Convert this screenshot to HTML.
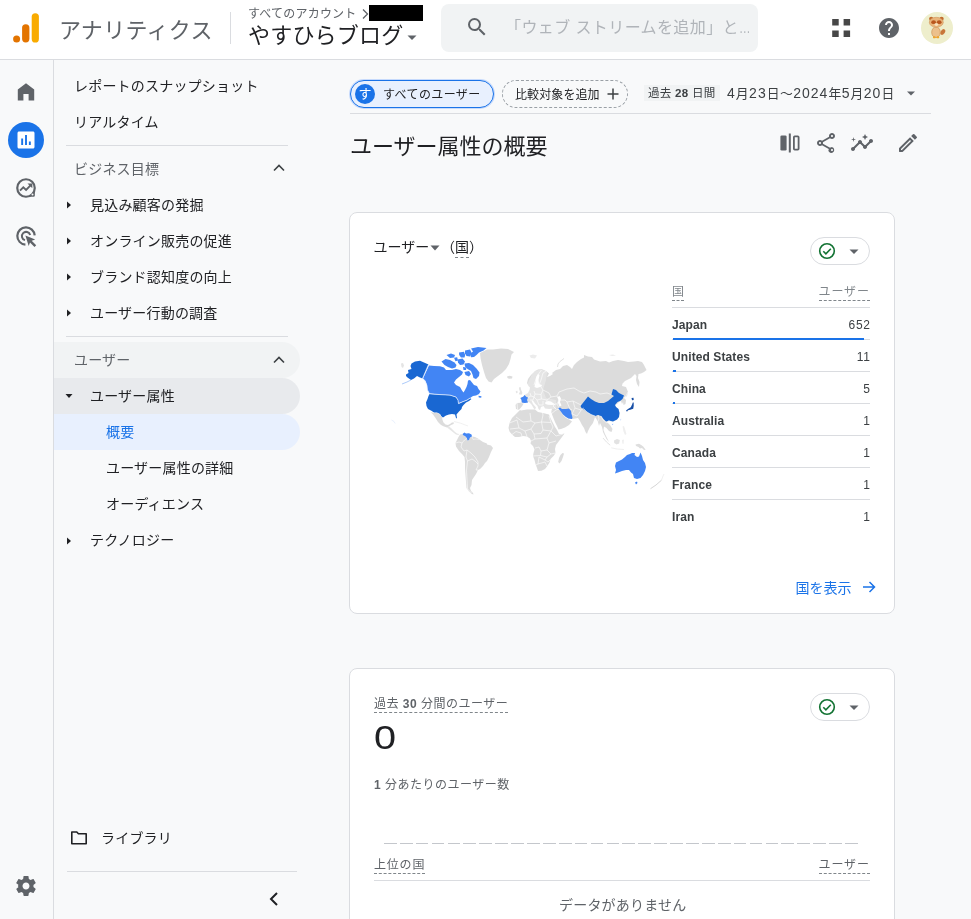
<!DOCTYPE html>
<html lang="ja">
<head>
<meta charset="utf-8">
<title>アナリティクス</title>
<style>
*{box-sizing:border-box;margin:0;padding:0}
html,body{width:971px;height:919px;overflow:hidden;background:#f8f9fa;
  font-family:"Liberation Sans","Noto Sans CJK JP",sans-serif;color:#202124;font-size:14px}
#wrap{position:absolute;left:0;top:0;width:971px;height:919px;overflow:hidden;will-change:transform;-webkit-font-smoothing:antialiased}
.abs{position:absolute}
.t{position:absolute;white-space:nowrap;line-height:1}
#hdr{position:absolute;left:0;top:0;width:971px;height:60px;background:#fff;border-bottom:1px solid #dadce0}
#rail{position:absolute;left:0;top:60px;width:54px;height:859px;border-right:1px solid #dadce0;background:#f8f9fa}
#nav{position:absolute;left:54px;top:60px;width:250px;height:859px;background:#f8f9fa}
.ni{position:absolute;left:0;width:246px;height:36px}
.ni .t{top:calc(50% + .5px);transform:translateY(-50%);font-size:14px;color:#202124;letter-spacing:.2px}
.ni.g2 .t{top:calc(50% + .1px)}
.t i{font-style:normal;font-size:12.800px;letter-spacing:.5px}
.hr{position:absolute;height:1px;background:#dadce0}
.card{position:absolute;background:#fff;border:1px solid #dadce0;border-radius:8px}
.row{position:absolute;left:322px;width:198px;height:32px;border-bottom:1px solid #dadce0}
.row .n{position:absolute;left:0;top:10px;font-size:12px;font-weight:bold;color:#3c4043;line-height:14px;letter-spacing:.1px}
.row .v{position:absolute;right:0;top:10px;font-size:12px;color:#3c4043;line-height:14px;letter-spacing:.7px;margin-right:-.7px}
.row .b{position:absolute;left:1px;bottom:-1px;height:2px;background:#1a73e8}
.dash{border-bottom:1px dashed #80868b}
</style>
</head>
<body>
<div id="wrap">
<!-- HEADER -->
<div id="hdr">
  <svg class="abs" style="left:12px;top:12px" width="28" height="32" viewBox="0 0 28 32">
    <rect x="19.700" y="1.200" width="7.200" height="29.300" rx="3.600" fill="#f9ab00"/>
    <rect x="10.100" y="12.200" width="7.300" height="18.300" rx="3.650" fill="#e37400"/>
    <circle cx="4.600" cy="27" r="3.500" fill="#e37400"/>
  </svg>
  <div class="t" style="left:59px;top:19.500px;font-size:22px;color:#5f6368;letter-spacing:.3px">アナリティクス</div>
  <div class="abs" style="left:230px;top:12px;width:1px;height:32px;background:#dadce0"></div>
  <div class="t" style="left:248px;top:8px;font-size:12px;color:#5f6368;letter-spacing:.2px">すべてのアカウント</div>
  <svg class="abs" style="left:361px;top:8px" width="8" height="12" viewBox="0 0 8 12"><path d="M2 1.500 L6.500 6 L2 10.500" fill="none" stroke="#5f6368" stroke-width="1.300"/></svg>
  <div class="abs" style="left:369px;top:5px;width:54px;height:16px;background:#000"></div>
  <div class="t" style="left:248px;top:25px;font-size:22px;color:#202124;letter-spacing:.2px">やすひらブログ</div>
  <svg class="abs" style="left:407px;top:35px" width="10" height="6" viewBox="0 0 10 6"><path d="M0.500 0.500 H9.500 L5 5 Z" fill="#5f6368"/></svg>
  <div class="abs" style="left:441px;top:4px;width:317px;height:48px;background:#f1f3f4;border-radius:8px"></div>
  <svg class="abs" style="left:465px;top:15px" width="24" height="24" viewBox="0 0 24 24"><path fill="#5f6368" d="M15.500 14h-.79l-.28-.27A6.471 6.471 0 0 0 16 9.500 6.500 6.500 0 1 0 9.500 16c1.610 0 3.090-.59 4.230-1.570l.27.28v.79l5 4.990L20.490 19l-4.990-5zm-6 0C7.010 14 5 11.990 5 9.500S7.010 5 9.500 5 14 7.010 14 9.500 11.990 14 9.500 14z"/></svg>
  <div class="t" style="left:505px;top:19.500px;font-size:16px;color:#b0b4b9;letter-spacing:.4px">「ウェブ ストリームを追加」と<span style="display:inline-block;transform:scaleX(.72);transform-origin:0 50%">…</span></div>
  <svg class="abs" style="left:829px;top:16px" width="24" height="24" viewBox="0 0 24 24"><path fill="#474747" d="M3.200 3h6.500v6.500h-6.500zM14.600 3h6.500v6.500h-6.500zM3.200 14.500h6.500v6.500h-6.500zM14.600 14.500h6.500v6.500h-6.500z"/></svg>
  <svg class="abs" style="left:877px;top:16px" width="24" height="24" viewBox="0 0 24 24"><path fill="#5f6368" d="M12 2C6.480 2 2 6.480 2 12s4.480 10 10 10 10-4.480 10-10S17.520 2 12 2zm1 17h-2v-2h2v2zm2.070-7.750l-.9.920C13.450 12.900 13 13.500 13 15h-2v-.5c0-1.100.45-2.100 1.170-2.830l1.240-1.260c.37-.36.590-.86.590-1.410 0-1.100-.9-2-2-2s-2 .9-2 2H8c0-2.210 1.790-4 4-4s4 1.790 4 4c0 .88-.36 1.680-.93 2.250z"/></svg>
  <svg class="abs" style="left:921px;top:12px" width="32" height="32" viewBox="0 0 32 32">
    <circle cx="16" cy="16" r="16" fill="#eeeecc"/>
    <ellipse cx="21.800" cy="20" rx="2" ry="3.200" transform="rotate(35 21.800 20)" fill="#c8763a"/>
    <circle cx="10.200" cy="6.800" r="2.100" fill="#c26a2c"/><circle cx="20.600" cy="6.800" r="2.100" fill="#c26a2c"/>
    <ellipse cx="15" cy="20.300" rx="4.300" ry="5.400" fill="#ecc08c" stroke="#c98a4e" stroke-width=".6"/>
    <ellipse cx="15.300" cy="10.300" rx="7" ry="5" fill="#e9b57c" stroke="#c98a4e" stroke-width=".5"/>
    <ellipse cx="12.600" cy="10.200" rx="2.400" ry="1.900" fill="#b9571f"/><ellipse cx="18.200" cy="10.200" rx="2.400" ry="1.900" fill="#b9571f"/>
    <ellipse cx="15.400" cy="12.600" rx="1.900" ry="1.400" fill="#f7e3c0"/>
    <rect x="12" y="24.300" width="2.600" height="1.900" rx=".6" fill="#f0a428"/><rect x="15.600" y="24.300" width="2.600" height="1.900" rx=".6" fill="#f0a428"/>
  </svg>
</div>

<!-- RAIL -->
<div id="rail">
  <svg class="abs" style="left:14px;top:20px" width="24" height="24" viewBox="0 0 24 24"><path fill="#5f6368" d="M12 3.200 L3.800 9.600 V20.500 H9.400 V14 H14.600 V20.500 H20.200 V9.600 Z"/></svg>
  <div class="abs" style="left:8px;top:62px;width:36px;height:36px;border-radius:18px;background:#1a73e8"></div>
  <svg class="abs" style="left:14px;top:68px" width="24" height="24" viewBox="0 0 24 24"><path fill="#fff" d="M5 3.500h14c.83 0 1.500.67 1.500 1.500v14c0 .83-.67 1.500-1.500 1.500H5c-.83 0-1.500-.67-1.500-1.500V5c0-.83.67-1.500 1.500-1.500z"/><path fill="#1a73e8" d="M7.200 10.500h1.900v6.500H7.200zM11.050 7h1.900v10h-1.900zM14.900 13.500h1.900v3.500h-1.900z"/></svg>
  <svg class="abs" style="left:14px;top:116px" width="24" height="24" viewBox="0 0 24 24"><path fill="#5f6368" d="M12 20.850 H19.600 Q20.850 20.850 20.850 19.600 V12 A8.850 8.850 0 0 1 12 20.850Z"/><circle cx="12" cy="12" r="8.750" fill="none" stroke="#5f6368" stroke-width="2.200"/><path fill="none" stroke="#5f6368" stroke-width="1.900" d="M6 14.600 l3.300 -3.300 2.800 2.700 4.400 -4.700"/><path fill="#5f6368" d="M13.500 7.400h4.800v4.800z"/><circle cx="18.500" cy="18.500" r="1" fill="#f8f9fa"/></svg>
  <svg class="abs" style="left:14px;top:164px" width="24" height="24" viewBox="0 0 24 24"><path fill="none" stroke="#5f6368" stroke-width="2.200" d="M20.700 11.400 A8.700 8.700 0 1 0 11.400 20.700"/><path fill="none" stroke="#5f6368" stroke-width="2" d="M16.150 11 A4.200 4.200 0 1 0 11 16.150"/><path fill="#5f6368" d="M11.400 11.400 l9.800 4 -3.500 1.300 4.500 4.500 -1.700 1.700 -4.500 -4.500 -1.300 3.500z"/></svg>
  <svg class="abs" style="left:14px;top:814px" width="24" height="24" viewBox="0 0 24 24"><path fill="#5f6368" d="M19.430 12.980c.04-.32.070-.64.070-.98s-.03-.66-.07-.98l2.110-1.650c.19-.15.240-.42.120-.64l-2-3.460c-.12-.22-.39-.3-.61-.22l-2.490 1c-.52-.4-1.080-.73-1.690-.98l-.38-2.650C14.460 2.180 14.250 2 14 2h-4c-.25 0-.46.180-.49.420l-.38 2.650c-.61.250-1.170.59-1.690.98l-2.490-1c-.23-.09-.49 0-.61.220l-2 3.460c-.13.220-.7.490.12.640l2.110 1.650c-.4.320-.7.650-.7.980s.3.660.7.980l-2.110 1.650c-.19.150-.24.420-.12.640l2 3.460c.12.220.39.300.61.220l2.490-1c.52.400 1.080.73 1.690.98l.38 2.650c.3.240.24.420.49.420h4c.25 0 .46-.18.490-.42l.38-2.650c.61-.25 1.170-.59 1.690-.98l2.490 1c.23.090.49 0 .61-.22l2-3.460c.12-.22.070-.49-.12-.64l-2.110-1.650zM12 15.500c-1.930 0-3.500-1.570-3.500-3.500s1.570-3.500 3.500-3.500 3.500 1.570 3.500 3.500-1.570 3.500-3.500 3.500z"/></svg>
</div>

<!-- NAV -->
<div id="nav">
  <div class="ni" style="top:7px;"><div class="t" style="left:20px;color:#202124">レポートのスナップショット</div></div>
  <div class="ni" style="top:43px;"><div class="t" style="left:20px;color:#202124">リアルタイム</div></div>
  <div class="hr" style="left:12px;top:85px;width:222px"></div>
  <div class="ni" style="top:90px;"><div class="t" style="left:20px;color:#5f6368">ビジネス目標</div><svg class="abs" style="left:218px;top:13px" width="14" height="10" viewBox="0 0 14 10"><path d="M2 7.500 L7 2.500 L12 7.500" fill="none" stroke="#3c4043" stroke-width="1.600"/></svg></div>
  <div class="ni" style="top:126px;"><svg class="abs" style="left:12px;top:14.700px" width="6" height="8" viewBox="0 0 6 8"><path d="M1 0.500 L5 4 L1 7.500Z" fill="#202124"/></svg><div class="t" style="left:36px;color:#202124">見込み顧客の発掘</div></div>
  <div class="ni" style="top:162px;"><svg class="abs" style="left:12px;top:14.700px" width="6" height="8" viewBox="0 0 6 8"><path d="M1 0.500 L5 4 L1 7.500Z" fill="#202124"/></svg><div class="t" style="left:36px;color:#202124">オンライン販売の促進</div></div>
  <div class="ni" style="top:198px;"><svg class="abs" style="left:12px;top:14.700px" width="6" height="8" viewBox="0 0 6 8"><path d="M1 0.500 L5 4 L1 7.500Z" fill="#202124"/></svg><div class="t" style="left:36px;color:#202124">ブランド認知度の向上</div></div>
  <div class="ni" style="top:234px;"><svg class="abs" style="left:12px;top:14.700px" width="6" height="8" viewBox="0 0 6 8"><path d="M1 0.500 L5 4 L1 7.500Z" fill="#202124"/></svg><div class="t" style="left:36px;color:#202124">ユーザー行動の調査</div></div>
  <div class="hr" style="left:12px;top:276px;width:222px"></div>
  <div class="ni g2" style="top:282px;background:#f1f3f4;border-radius:0 18px 18px 0;"><div class="t" style="left:20px;color:#5f6368">ユーザー</div><svg class="abs" style="left:218px;top:13px" width="14" height="10" viewBox="0 0 14 10"><path d="M2 7.500 L7 2.500 L12 7.500" fill="none" stroke="#3c4043" stroke-width="1.600"/></svg></div>
  <div class="ni g2" style="top:318px;background:#e8eaed;border-radius:0 18px 18px 0;"><svg class="abs" style="left:11px;top:15px" width="8" height="6" viewBox="0 0 8 6"><path d="M0.500 1 H7.500 L4 5Z" fill="#202124"/></svg><div class="t" style="left:36px;color:#202124">ユーザー属性</div></div>
  <div class="ni g2" style="top:354px;background:#e8f0fe;border-radius:0 18px 18px 0;"><div class="t" style="left:52px;color:#1a73e8">概要</div></div>
  <div class="ni g2" style="top:390px;"><div class="t" style="left:52px;color:#202124">ユーザー属性の詳細</div></div>
  <div class="ni g2" style="top:426px;"><div class="t" style="left:52px;color:#202124">オーディエンス</div></div>
  <div class="ni g2" style="top:462px;"><svg class="abs" style="left:12px;top:14.700px" width="6" height="8" viewBox="0 0 6 8"><path d="M1 0.500 L5 4 L1 7.500Z" fill="#202124"/></svg><div class="t" style="left:36px;color:#202124">テクノロジー</div></div>
  <svg class="abs" style="left:16px;top:770px" width="18" height="16" viewBox="0 0 18 16"><path d="M1.800 2 H6.800 L8.400 3.700 H16.200 V13.800 H1.800Z" fill="none" stroke="#202124" stroke-width="1.600" stroke-linejoin="round"/></svg>
  <div class="ni" style="top:759px;"><div class="t" style="left:47px;color:#202124">ライブラリ</div></div>
  <div class="hr" style="left:13px;top:811px;width:230px"></div>
  <svg class="abs" style="left:214px;top:831px" width="12" height="16" viewBox="0 0 12 16"><path d="M9 2 L3 8 L9 14" fill="none" stroke="#202124" stroke-width="2"/></svg>
</div>

<!-- MAIN -->
<div id="main">
  <!-- filter row -->
  <div class="abs" style="left:350px;top:80px;width:144px;height:28px;border:1px solid #1a73e8;border-radius:14px;background:#e8f0fe;box-shadow:0 0 0 1px #c6dafc"></div>
  <div class="abs" style="left:355px;top:84px;width:20px;height:20px;border-radius:10px;background:#1a73e8"></div>
  <div class="t" style="left:358.500px;top:86.500px;font-size:13px;color:#fff">す</div>
  <div class="t" style="left:383px;top:89px;font-size:12px;color:#202124;letter-spacing:.4px">すべてのユーザー</div>
  <div class="abs" style="left:502px;top:80px;width:126px;height:28px;border:1px dashed #9aa0a6;border-radius:14px"></div>
  <div class="t" style="left:515px;top:89px;font-size:12px;color:#202124;letter-spacing:.1px">比較対象を追加</div>
  <svg class="abs" style="left:606px;top:86.500px" width="14" height="14" viewBox="0 0 14 14"><path d="M7 1.500V12.500M1.500 7H12.500" stroke="#3c4043" stroke-width="1.500" fill="none"/></svg>
  <div class="abs" style="left:644px;top:85px;width:76px;height:16px;background:#f1f3f4"></div>
  <div class="t" style="left:648px;top:88px;font-size:11.500px;color:#3c4043;letter-spacing:.3px">過去 <b>28</b> 日間</div>
  <div class="t" style="left:727px;top:86px;font-size:14px;color:#3c4043;letter-spacing:1px">4<i>月</i>23<i>日</i><i>〜</i>2024<i>年</i>5<i>月</i>20<i>日</i></div>
  <svg class="abs" style="left:906px;top:91px" width="10" height="6" viewBox="0 0 10 6"><path d="M1 0.500H9L5 4.500Z" fill="#5f6368"/></svg>
  <div class="hr" style="left:350px;top:113px;width:581px"></div>
  <!-- title row -->
  <div class="t" style="left:350px;top:135.500px;font-size:22px;color:#202124">ユーザー属性の概要</div>
  <svg class="abs" style="left:778px;top:131px" width="24" height="24" viewBox="0 0 24 24"><rect x="2.400" y="4.400" width="6.200" height="15.200" rx="1.300" fill="#5f6368"/><rect x="10.800" y="2.500" width="2" height="19" fill="#5f6368"/><rect x="15.900" y="5.400" width="4.700" height="13.200" rx=".8" fill="none" stroke="#5f6368" stroke-width="1.800"/></svg>
  <svg class="abs" style="left:814px;top:131px" width="24" height="24" viewBox="0 0 24 24"><path fill="#5f6368" d="M18 16.080c-.76 0-1.440.30-1.960.77L8.910 12.700c.05-.23.090-.46.090-.70s-.04-.47-.09-.70l7.050-4.110c.54.500 1.250.81 2.040.81 1.660 0 3-1.340 3-3s-1.340-3-3-3-3 1.340-3 3c0 .24.040.47.090.70L8.040 9.810C7.500 9.310 6.790 9 6 9c-1.660 0-3 1.340-3 3s1.340 3 3 3c.79 0 1.500-.31 2.040-.81l7.120 4.160c-.5.210-.8.430-.8.650 0 1.610 1.310 2.920 2.920 2.920s2.920-1.310 2.920-2.920-1.310-2.920-2.920-2.920zM18 4c.55 0 1 .45 1 1s-.45 1-1 1-1-.45-1-1 .45-1 1-1zM6 13c-.55 0-1-.45-1-1s.45-1 1-1 1 .45 1 1-.45 1-1 1zm12 7.020c-.55 0-1-.45-1-1s.45-1 1-1 1 .45 1 1-.45 1-1 1z"/></svg>
  <svg class="abs" style="left:850px;top:131px" width="24" height="24" viewBox="0 0 24 24"><path fill="#5f6368" d="M21 8c-1.450 0-2.260 1.440-1.930 2.510l-3.550 3.560c-.30-.09-.74-.09-1.040 0l-2.550-2.550C12.270 10.450 11.460 9 10 9c-1.450 0-2.270 1.440-1.930 2.520l-4.560 4.550C2.440 15.740 1 16.550 1 18c0 1.100.9 2 2 2 1.450 0 2.260-1.440 1.930-2.510l4.550-4.560c.30.09.74.09 1.040 0l2.550 2.550C12.730 16.550 13.540 18 15 18c1.450 0 2.270-1.440 1.930-2.520l3.560-3.550c1.070.33 2.510-.48 2.510-1.930 0-1.100-.9-2-2-2z"/><path fill="#5f6368" d="M15 9l.94-2.070L18 6l-2.060-.93L15 3l-.92 2.070L12 6l2.080.93zM3.500 11L4 9l2-.5L4 8l-.5-2L3 8l-2 .5L3 9z"/></svg>
  <svg class="abs" style="left:896px;top:131px" width="24" height="24" viewBox="0 0 24 24"><path fill="#5f6368" d="M3 17.460v3.040c0 .28.220.50.500.50h3.040c.13 0 .26-.05.350-.15L17.810 9.940l-3.750-3.750L3.150 17.100c-.10.100-.15.220-.15.360zM20.710 7.040a.996.996 0 0 0 0-1.410l-2.340-2.340a.996.996 0 0 0-1.410 0l-1.830 1.830 3.750 3.750 1.830-1.830z"/><path fill="#f8f9fa" d="M14.060 9.020l.92.920L5.920 19H5v-.92z"/></svg>

  <!-- CARD 1 -->
  <div class="card" id="c1" style="left:349px;top:212px;width:546px;height:402px">
    <div class="t" style="left:23.500px;top:27px;font-size:14px;color:#202124">ユーザー</div>
    <svg class="abs" style="left:80px;top:32px" width="10" height="6" viewBox="0 0 10 6"><path d="M0.500 0.500H9.500L5 5.500Z" fill="#5f6368"/></svg>
    <div class="t" style="left:91px;top:27px;font-size:14px;color:#202124">（<span class="dash" style="padding-bottom:2px">国</span>）</div>
    <div class="abs" style="left:460px;top:24px;width:60px;height:28px;border:1px solid #dadce0;border-radius:14px;background:#fff"></div>
    <svg class="abs" style="left:467px;top:28px" width="20" height="20" viewBox="0 0 20 20"><circle cx="10" cy="10" r="7.300" fill="none" stroke="#137333" stroke-width="1.600"/><path d="M6.300 10.200l2.600 2.600 4.900-5" fill="none" stroke="#137333" stroke-width="1.600"/></svg>
    <svg class="abs" style="left:499px;top:36px" width="10" height="6" viewBox="0 0 10 6"><path d="M0.500 0.500H9.500L5 5Z" fill="#5f6368"/></svg>
    <div class="t" style="left:322px;top:73px;font-size:12px;color:#80868b"><span class="dash" style="padding-bottom:1px">国</span></div>
    <div class="t" style="right:25px;top:73px;font-size:12px;color:#80868b;letter-spacing:.9px"><span class="dash" style="padding-bottom:1px;margin-right:-.9px">ユーザー</span></div>
    <div class="hr" style="left:322px;top:94px;width:198px"></div>
    <div class="row" style="top:95px"><div class="n">Japan</div><div class="v">652</div><div class="b" style="width:191px"></div></div>
    <div class="row" style="top:127px"><div class="n">United States</div><div class="v">11</div><div class="b" style="width:3px"></div></div>
    <div class="row" style="top:159px"><div class="n">China</div><div class="v">5</div><div class="b" style="width:2px"></div></div>
    <div class="row" style="top:191px"><div class="n">Australia</div><div class="v">1</div></div>
    <div class="row" style="top:223px"><div class="n">Canada</div><div class="v">1</div></div>
    <div class="row" style="top:255px"><div class="n">France</div><div class="v">1</div></div>
    <div class="row" style="top:287px;border-bottom:0"><div class="n">Iran</div><div class="v">1</div></div>
    <div class="t" style="left:445.500px;top:367.800px;font-size:14px;color:#1a73e8">国を表示</div>
    <svg class="abs" style="left:511px;top:366px" width="16" height="16" viewBox="0 0 16 16"><path d="M2 8H13.500M8.500 3L13.500 8L8.500 13" fill="none" stroke="#1a73e8" stroke-width="1.500"/></svg>
  </div>

  <!-- MAP -->
<svg class="abs" style="left:380px;top:330px" width="290" height="180" viewBox="380 330 290 180">
<path d="M401.0,363.5 403.0,363.0 404.0,365.5 403.0,368.0 401.5,367.0Z" fill="#e4e4e4"/>
<path d="M406.0,374.5 408.5,373.0 408.0,370.0 411.5,369.0 410.5,366.0 411.5,363.5 415.0,361.5 420.0,360.8 424.0,362.5 428.5,364.5 422.5,378.5 420.0,377.5 417.0,376.0 414.0,378.5 411.0,380.0 407.5,377.5 406.0,376.0Z" fill="#1967d2"/>
<path d="M411.0,380.0 407.0,382.0 402.0,384.0" fill="none" stroke="#8ab4f8" stroke-width="0.7"/>
<path d="M429.0,365.5 434.0,366.0 440.0,366.2 444.0,367.5 446.0,370.0 452.0,370.0 456.0,369.0 460.0,370.0 463.0,372.0 462.0,374.5 459.0,377.0 456.0,379.5 454.0,382.5 456.0,385.0 460.0,387.0 462.0,390.5 463.5,392.5 465.0,390.0 466.5,387.0 467.5,384.0 468.0,380.5 470.0,380.0 472.0,382.5 474.0,385.0 477.0,386.0 478.5,389.0 480.5,391.5 479.0,394.0 476.0,395.5 473.0,396.0 470.0,398.0 467.0,400.0 463.0,401.5 460.0,402.5 458.5,403.5 458.0,400.0 456.0,397.0 450.0,395.0 440.0,394.5 429.5,393.5 427.5,390.0 427.0,385.0 425.5,381.0 423.0,378.5Z" fill="#4285f4"/>
<path d="M471.0,348.5 478.0,347.0 486.5,348.0 483.5,350.5 479.0,352.5 476.5,355.0 474.0,357.0 471.0,357.2 470.0,354.0 473.0,351.5Z" fill="#4285f4"/>
<path d="M464.5,363.5 469.0,363.0 473.0,365.0 476.5,368.5 479.5,372.5 479.0,376.0 476.0,379.0 473.5,378.0 472.5,374.5 471.0,371.0 467.5,369.0 465.0,366.5Z" fill="#4285f4"/>
<path d="M441.5,361.5 445.5,359.0 450.0,360.0 454.5,362.5 456.5,365.0 455.5,367.5 452.0,368.5 448.0,367.0 444.5,365.0Z" fill="#4285f4"/>
<path d="M446.5,355.0 451.0,353.5 455.0,355.0 454.0,357.5 450.0,358.0Z" fill="#4285f4"/>
<path d="M457.5,359.5 462.5,358.5 465.0,361.5 463.5,364.5 460.0,365.0 458.0,362.5Z" fill="#4285f4"/>
<path d="M465.0,350.5 470.0,349.5 471.5,352.5 470.0,356.5 466.5,356.0 465.0,353.5Z" fill="#4285f4"/>
<path d="M459.0,352.5 464.0,351.8 465.2,355.0 464.5,357.5 461.0,357.5 459.2,355.0Z" fill="#4285f4"/>
<path d="M454.0,357.8 457.2,357.2 458.0,360.5 455.5,361.2Z" fill="#4285f4"/>
<path d="M478.5,395.8 481.5,396.2 481.2,397.8 478.8,397.5Z" fill="#4285f4"/>
<path d="M464.5,372.0 469.0,371.0 471.0,374.0 469.0,376.5 465.5,375.0Z" fill="#4285f4"/>
<path d="M463.0,367.0 466.5,367.5 466.0,370.0 463.5,370.0Z" fill="#4285f4"/>
<path d="M429.5,394.0 440.0,394.8 450.0,395.3 456.0,397.2 458.0,400.2 458.5,403.8 463.0,401.8 467.0,400.3 470.0,398.3 471.5,399.0 469.0,401.0 466.0,402.5 463.5,405.0 462.0,407.0 461.5,409.0 459.0,411.5 456.5,414.5 457.0,418.5 456.0,418.0 455.0,414.5 452.0,414.0 449.0,414.5 446.0,415.5 443.0,417.5 441.5,416.5 440.0,414.0 437.0,412.5 434.0,412.5 431.0,410.5 428.0,409.0 426.5,406.0 426.0,402.5 427.5,399.0 428.5,396.0Z" fill="#1967d2"/>
<path d="M428.5,364.5 422.5,378.5 424.5,380.0 426.8,385.0 427.5,390.0 429.5,393.7 440.0,394.6 450.0,395.1 456.0,397.0 458.0,400.1 458.5,403.6 463.0,401.6 467.0,400.1 470.0,398.1" fill="none" stroke="#e8f0fe" stroke-width="0.7"/>
<path d="M430.5,412.0 434.0,413.0 437.5,413.0 440.0,414.5 442.0,417.2 442.5,420.0 443.5,422.5 445.5,424.5 448.0,425.0 450.0,424.0 452.0,422.5 454.0,422.5 453.5,424.0 451.0,425.0 449.0,426.5 447.0,427.5 444.0,426.5 441.0,425.0 438.0,422.0 435.5,418.0 433.0,414.5Z" fill="#dcdcdc"/>
<path d="M447.0,427.5 449.0,426.5 451.0,428.0 453.0,430.0 455.0,432.0 457.0,433.5 459.0,434.0 458.5,435.0 456.0,434.5 454.0,433.0 451.5,431.0 449.0,429.0Z" fill="#e6e6e6"/>
<path d="M454.0,421.5 460.0,423.0 468.0,426.0" fill="none" stroke="#ededed" stroke-width="0.8"/>
<path d="M455.5,443.0 457.0,440.0 458.5,437.0 460.0,434.5 462.5,434.0 463.5,435.5 465.0,436.0 466.8,438.0 467.5,440.5 469.0,440.0 470.0,437.5 472.0,436.5 475.0,437.0 478.0,438.5 480.0,440.0 483.0,442.0 486.9,443.5 487.0,444.5 491.0,445.5 493.0,448.0 491.0,452.0 489.0,457.0 487.0,461.0 485.0,463.0 483.0,466.0 480.0,469.0 478.0,470.0 476.0,474.0 474.0,477.0 472.0,480.0 471.5,485.0 470.0,488.0 471.0,491.0 473.0,493.0 473.5,494.5 472.0,494.0 469.0,491.5 466.5,488.0 466.0,482.0 465.5,475.0 465.0,468.0 465.0,462.0 464.5,457.0 462.0,454.0 459.0,451.0 456.0,446.5Z" fill="#dcdcdc"/>
<path d="M462.5,434.0 464.5,432.5 466.0,433.5 469.0,433.2 471.5,434.5 472.0,436.5 470.0,437.5 469.0,440.0 467.5,440.5 466.8,438.0 465.0,436.0 463.5,435.5Z" fill="#4285f4"/>
<path d="M455.5,443.0 459.0,442.0 462.0,443.0 464.5,440.0 466.8,438.5" fill="none" stroke="#fff" stroke-width="0.6"/>
<path d="M462.0,443.0 461.0,447.0 464.0,451.0 467.0,450.0 471.0,453.0 475.0,457.0 478.0,462.0 478.0,466.0 476.0,470.0 478.0,470.0" fill="none" stroke="#fff" stroke-width="0.6"/>
<path d="M467.0,450.0 466.0,457.0 467.5,461.0 472.0,459.0 475.0,461.0 478.0,464.0" fill="none" stroke="#fff" stroke-width="0.6"/>
<path d="M467.5,461.0 466.5,470.0 467.0,480.0 467.5,489.0 471.5,493.0" fill="none" stroke="#fff" stroke-width="0.6"/>
<path d="M472.0,436.5 473.0,439.5 476.0,439.0 479.0,439.5" fill="none" stroke="#fff" stroke-width="0.5"/>
<path d="M480.0,353.0 484.0,351.0 487.0,349.5 493.0,349.5 501.0,348.5 508.0,349.0 514.0,352.0 511.5,354.5 510.5,359.0 509.0,364.0 506.0,369.0 502.0,373.0 498.0,376.0 494.0,379.0 491.5,382.5 488.5,381.5 486.0,378.0 484.0,372.0 482.0,365.0 480.5,358.0Z" fill="#dcdcdc"/>
<path d="M507.0,376.5 509.5,375.8 512.5,376.5 512.0,378.5 509.0,378.8 507.5,378.0Z" fill="#dcdcdc"/>
<path d="M529.5,355.5 533.0,354.5 537.0,355.5 535.0,358.5 531.0,358.0Z" fill="#ececec"/>
<path d="M557.5,367.0 558.0,364.0 560.0,361.5 564.0,358.5" fill="none" stroke="#e2e2e2" stroke-width="1.0"/>
<path d="M609.0,355.0 613.0,354.5 616.0,355.5 612.0,356.0Z" fill="#ececec"/>
<path d="M519.0,387.5 520.5,387.0 521.2,390.0 522.5,393.0 521.5,394.7 518.8,394.2 520.0,391.5 519.2,389.5Z" fill="#e2e2e2"/>
<path d="M515.8,391.0 517.5,390.8 517.6,393.0 516.0,393.2Z" fill="#e6e6e6"/>
<path d="M516.0,409.0 515.5,405.0 517.0,403.0 520.5,402.8 521.5,400.0 520.0,398.0 523.5,396.5 524.5,395.0 528.0,393.0 529.5,390.0 530.0,387.5 531.5,389.0 528.5,386.0 527.0,383.0 528.0,379.0 531.0,375.0 535.0,371.0 538.0,369.5 541.5,369.0 546.0,371.0 549.0,373.5 547.0,377.0 550.0,376.0 553.0,374.0 552.0,373.0 556.0,370.0 560.0,369.0 563.0,366.0 567.0,365.0 570.0,367.0 572.0,369.0 574.0,365.0 577.0,362.0 581.0,359.0 584.0,357.5 584.0,355.0 588.0,356.5 592.0,357.0 594.0,359.5 600.0,361.5 606.0,361.0 609.0,362.5 613.0,361.0 618.0,360.0 624.0,361.0 628.0,362.0 634.0,361.5 638.0,361.0 642.0,362.0 644.0,365.0 645.5,368.0 646.5,370.0 644.0,372.0 641.0,373.5 638.5,374.0 638.0,378.0 639.5,382.0 639.0,387.0 637.0,384.0 636.0,380.0 636.5,376.0 635.0,374.0 633.0,376.0 631.0,378.0 628.0,379.5 625.0,381.0 622.5,383.5 622.0,386.0 626.0,387.0 628.0,392.0 627.0,396.0 624.0,398.0 626.0,400.0 625.5,404.0 623.5,405.0 623.0,402.0 622.0,404.0 621.0,401.0 619.0,402.0 617.0,404.0 615.0,405.0 616.0,407.0 618.5,409.0 619.5,413.0 619.0,417.0 617.0,419.5 613.0,421.5 609.0,421.0 607.0,422.0 610.0,425.0 612.5,429.0 611.5,432.0 609.0,431.0 606.5,428.0 604.0,426.5 603.5,430.0 605.0,434.0 607.0,438.0 609.0,442.0 606.5,439.0 604.5,435.0 603.0,432.0 602.0,427.0 600.0,423.0 599.0,426.0 598.0,422.0 596.5,419.0 595.0,417.0 593.0,423.0 590.0,427.0 588.0,431.0 587.0,434.0 585.5,432.0 584.0,428.0 582.0,425.0 580.0,421.0 578.0,418.0 575.0,418.5 572.5,419.0 568.5,418.5 566.0,417.0 563.0,414.5 560.5,411.5 563.0,415.0 566.0,418.0 570.0,420.0 572.0,421.5 569.0,425.0 565.0,427.5 561.0,429.0 558.5,429.5 557.0,426.0 555.0,422.0 553.0,417.0 551.5,413.0 551.0,410.5 552.0,408.5 554.0,408.5 549.0,409.0 545.0,408.5 543.5,406.0 541.0,407.0 540.0,410.0 538.5,409.0 537.5,406.0 535.0,403.5 533.0,400.5 531.5,400.5 533.0,404.0 536.0,407.5 535.0,409.5 533.5,408.0 531.5,404.5 529.0,402.0 527.0,402.5 524.0,403.0 522.5,405.5 521.0,407.5 519.0,409.8Z" fill="#dcdcdc"/>
<path d="M536.0,377.5 538.0,374.0 539.5,375.0 538.5,380.0 539.0,384.0 542.0,385.0 541.5,386.5 537.0,388.0 534.5,387.0 535.5,382.0Z" fill="#fff"/>
<path d="M545.0,402.5 548.0,401.0 551.0,401.5 553.0,403.0 555.5,404.5 552.0,405.0 548.0,404.8 545.5,404.0Z" fill="#fff"/>
<path d="M557.5,397.0 559.5,396.0 561.0,398.5 560.0,402.0 561.5,405.5 559.5,406.5 558.0,403.0 558.5,400.0Z" fill="#fff"/>
<path d="M520.0,410.0 521.0,410.5 527.0,409.5 535.0,409.5 538.0,412.0 543.0,413.0 549.0,414.5 549.5,416.0 552.0,421.0 555.0,427.0 557.0,430.0 559.0,434.0 562.0,434.0 564.5,433.5 562.0,437.0 559.0,441.0 556.0,445.0 555.0,449.0 555.5,453.0 554.0,455.5 550.5,459.0 549.5,462.5 547.0,466.5 545.0,469.0 541.5,470.8 538.0,471.0 537.0,468.0 535.5,464.0 534.5,460.0 533.0,456.0 533.5,453.0 534.5,449.5 533.0,446.0 530.5,443.5 531.0,441.0 530.0,438.5 527.0,436.5 523.0,436.0 519.0,437.0 515.0,437.0 512.0,434.5 509.5,431.5 508.5,428.0 509.5,423.0 512.0,418.0 516.0,414.0Z" fill="#dcdcdc"/>
<path d="M562.5,453.0 564.0,453.5 563.0,457.0 561.5,461.0 559.5,463.5 558.2,462.0 559.0,458.0 560.5,455.0Z" fill="#dcdcdc"/>
<path d="M517.0,403.0 524.0,395.0 528.0,383.0 533.0,372.0 541.0,369.0 547.0,372.0 546.0,380.0 543.0,390.0 546.0,398.0 556.0,400.0 556.0,409.0 545.0,409.0 536.0,410.0 527.0,403.0Z" fill="#fff" opacity=".28"/>
<path d="M520.5,398.0 523.5,396.5 524.5,395.0 526.5,397.0 528.0,397.5 527.0,400.0 528.0,402.5 525.0,403.0 522.0,402.8 521.5,400.0Z" fill="#4285f4"/>
<path d="M558.0,408.0 560.0,407.5 562.0,409.0 566.0,409.0 569.0,408.5 571.0,411.0 571.5,414.0 572.5,417.5 572.0,419.0 568.5,418.5 566.0,417.0 563.0,414.5 560.5,411.0Z" fill="#4285f4"/>
<path d="M580.5,406.0 588.0,396.5 591.0,399.0 595.0,401.5 599.0,403.0 604.0,403.0 608.0,401.0 611.0,398.5 614.0,396.0 611.5,394.5 613.0,389.0 616.0,390.0 619.0,393.0 622.0,394.5 624.0,395.5 622.5,399.0 620.0,401.0 617.5,402.0 615.0,405.0 616.0,407.0 618.5,409.0 619.5,413.0 619.0,417.0 617.0,419.5 613.0,421.5 609.0,420.5 606.0,421.5 603.5,419.0 601.0,416.0 598.0,415.0 595.0,416.0 591.0,414.5 587.0,412.0 584.0,409.5 581.5,408.0Z" fill="#1967d2"/>
<path d="M631.5,398.0 633.5,397.8 633.7,400.0 632.0,400.2Z" fill="#174ea6"/>
<path d="M632.8,402.5 633.7,402.5 633.7,406.0 633.2,408.8 630.2,409.8 628.0,410.3 627.0,411.8 626.0,410.6 628.0,409.0 630.8,407.2 632.2,404.2Z" fill="#174ea6"/>
<path d="M603.0,438.0 606.5,442.0 610.2,445.2" fill="none" stroke="#e4e4e4" stroke-width="1.0"/>
<path d="M611.2,447.8 617.0,449.0 624.0,449.5" fill="none" stroke="#ebebeb" stroke-width="0.8"/>
<path d="M614.0,440.5 617.0,439.0 619.8,440.0 619.2,443.5 616.5,444.5 614.2,443.0Z" fill="#e2e2e2"/>
<path d="M622.5,426.5 624.0,426.0 625.0,429.0 626.5,434.0 625.0,435.0 623.5,431.5Z" fill="#efefef"/>
<path d="M622.0,440.0 624.0,439.5 623.5,444.0 622.3,443.5Z" fill="#f0f0f0"/>
<path d="M635.5,444.5 639.0,443.8 641.2,445.0 643.2,446.5 645.7,449.7 644.0,450.0 642.0,448.0 640.0,448.5 638.5,447.0 636.0,446.0Z" fill="#dedede"/>
<path d="M620.2,419.0 621.2,418.8 621.0,420.5 620.3,420.4Z" fill="#cfe0fc"/>
<path d="M612.0,424.0 613.2,423.8 613.0,425.0 612.1,425.0Z" fill="#a8c7fa"/>
<path d="M615.0,473.5 616.0,470.0 615.0,466.0 616.0,462.5 619.0,461.0 622.0,459.5 625.0,457.0 627.0,455.0 630.0,454.0 632.0,453.0 635.0,453.0 634.5,455.0 637.0,457.0 639.0,456.5 640.5,452.5 642.0,456.0 643.0,460.0 645.0,463.0 646.0,467.0 645.0,471.0 643.0,475.0 640.5,478.0 637.0,479.0 634.0,478.0 633.0,474.0 631.0,472.5 629.0,470.0 626.0,470.0 622.0,471.0 618.0,472.5Z" fill="#4285f4"/>
<path d="M635.0,482.5 637.0,481.5 637.5,483.0 636.0,484.5Z" fill="#4285f4"/>
<path d="M650.5,488.7 656.0,485.0 661.5,480.2" fill="none" stroke="#d6d6d6" stroke-width="1.0"/>
<path d="M661.5,480.2 663.0,476.0 664.0,474.0" fill="none" stroke="#ececec" stroke-width="0.8"/>
<path d="M391.5,420.0 394.0,421.5 395.2,423.5" fill="none" stroke="#e3ecfb" stroke-width="0.8"/>
<path d="M516.0,417.0 523.0,422.0 531.0,421.0 530.0,413.0" fill="none" stroke="#fff" stroke-width="0.6"/>
<path d="M531.0,421.0 535.0,423.0 541.5,422.0 543.0,415.0 542.0,410.0" fill="none" stroke="#fff" stroke-width="0.6"/>
<path d="M541.5,422.0 551.0,422.5 549.0,416.0" fill="none" stroke="#fff" stroke-width="0.6"/>
<path d="M517.0,420.0 519.0,428.0 525.0,431.0 531.0,429.0 535.0,423.0" fill="none" stroke="#fff" stroke-width="0.6"/>
<path d="M525.0,431.0 527.0,436.5" fill="none" stroke="#fff" stroke-width="0.6"/>
<path d="M531.0,429.0 534.0,434.0 541.0,433.5 543.0,430.0 541.5,422.0" fill="none" stroke="#fff" stroke-width="0.6"/>
<path d="M543.0,430.0 551.0,431.0 553.0,427.0 551.0,422.5" fill="none" stroke="#fff" stroke-width="0.6"/>
<path d="M551.0,431.0 556.0,436.0 563.0,434.0" fill="none" stroke="#fff" stroke-width="0.6"/>
<path d="M509.5,423.0 517.0,420.0" fill="none" stroke="#fff" stroke-width="0.6"/>
<path d="M510.0,429.0 519.0,428.0" fill="none" stroke="#fff" stroke-width="0.6"/>
<path d="M512.0,434.5 516.0,431.5 521.0,433.0 522.0,436.5" fill="none" stroke="#fff" stroke-width="0.6"/>
<path d="M534.0,434.0 535.0,439.0 531.0,441.0" fill="none" stroke="#fff" stroke-width="0.6"/>
<path d="M535.0,439.0 547.0,438.0 551.0,431.0" fill="none" stroke="#fff" stroke-width="0.6"/>
<path d="M547.0,438.0 549.0,443.0 556.0,441.0" fill="none" stroke="#fff" stroke-width="0.6"/>
<path d="M549.0,443.0 547.0,450.0 541.0,451.0 539.0,447.0 535.0,448.0" fill="none" stroke="#fff" stroke-width="0.6"/>
<path d="M547.0,450.0 551.0,454.0 555.5,453.0" fill="none" stroke="#fff" stroke-width="0.6"/>
<path d="M541.0,451.0 540.5,455.5 533.0,456.0" fill="none" stroke="#fff" stroke-width="0.6"/>
<path d="M540.5,455.5 547.0,457.0 551.0,454.0" fill="none" stroke="#fff" stroke-width="0.6"/>
<path d="M539.0,457.0 538.0,464.0 536.0,465.0" fill="none" stroke="#fff" stroke-width="0.6"/>
<path d="M539.0,457.0 545.0,460.0 547.0,457.0" fill="none" stroke="#fff" stroke-width="0.6"/>
<path d="M545.0,460.0 548.0,462.0 550.0,460.0" fill="none" stroke="#fff" stroke-width="0.6"/>
<path d="M538.0,464.0 545.0,462.0 547.0,466.0" fill="none" stroke="#fff" stroke-width="0.6"/>
<path d="M517.0,403.0 517.5,409.0" fill="none" stroke="#fff" stroke-width="0.6"/>
<path d="M521.5,403.0 527.0,404.0" fill="none" stroke="#fff" stroke-width="0.6"/>
<path d="M528.0,397.5 531.0,396.0 530.0,393.0" fill="none" stroke="#fff" stroke-width="0.6"/>
<path d="M531.0,396.0 534.0,397.0 535.0,394.0 534.0,391.0" fill="none" stroke="#fff" stroke-width="0.6"/>
<path d="M534.0,397.0 533.0,400.0 530.0,400.0" fill="none" stroke="#fff" stroke-width="0.6"/>
<path d="M535.0,394.0 541.0,394.5 543.0,390.0 541.0,387.0" fill="none" stroke="#fff" stroke-width="0.6"/>
<path d="M541.0,394.5 541.5,399.0 537.0,400.0 534.0,397.0" fill="none" stroke="#fff" stroke-width="0.6"/>
<path d="M541.5,399.0 547.0,400.0 551.0,397.0 549.0,393.0 543.0,390.0" fill="none" stroke="#fff" stroke-width="0.6"/>
<path d="M537.0,400.0 539.0,405.0 543.0,405.0 543.0,401.0" fill="none" stroke="#fff" stroke-width="0.6"/>
<path d="M547.0,400.0 546.0,404.0" fill="none" stroke="#fff" stroke-width="0.6"/>
<path d="M534.0,385.0 537.0,376.0 541.5,370.0" fill="none" stroke="#fff" stroke-width="0.6"/>
<path d="M539.0,385.0 541.0,380.0 543.0,373.0 546.0,371.0" fill="none" stroke="#fff" stroke-width="0.6"/>
<path d="M551.0,397.0 557.0,396.0 559.0,392.0 567.0,389.0 574.0,388.0 579.0,391.0 583.9,393.0" fill="none" stroke="#fff" stroke-width="0.6"/>
<path d="M557.0,396.0 559.0,400.0 557.0,404.0" fill="none" stroke="#fff" stroke-width="0.6"/>
<path d="M559.0,400.0 565.0,400.0 567.0,402.0 573.0,401.0 581.0,405.0" fill="none" stroke="#fff" stroke-width="0.6"/>
<path d="M556.0,409.0 553.0,406.0 555.0,404.0 557.0,404.0" fill="none" stroke="#fff" stroke-width="0.6"/>
<path d="M557.0,404.0 559.0,408.0" fill="none" stroke="#fff" stroke-width="0.6"/>
<path d="M551.0,414.0 556.0,410.0 559.0,409.0" fill="none" stroke="#fff" stroke-width="0.6"/>
<path d="M549.0,414.0 552.0,410.0 551.0,409.0" fill="none" stroke="#fff" stroke-width="0.6"/>
<path d="M567.0,402.0 570.0,409.0 572.0,410.0" fill="none" stroke="#fff" stroke-width="0.6"/>
<path d="M573.0,401.0 575.0,408.0 572.0,414.0" fill="none" stroke="#fff" stroke-width="0.6"/>
<path d="M575.0,408.0 581.0,410.0 583.9,408.0" fill="none" stroke="#fff" stroke-width="0.6"/>
<path d="M572.0,414.0 577.0,416.0 580.0,412.0 581.0,410.0" fill="none" stroke="#fff" stroke-width="0.6"/>
<path d="M584.0,393.0 590.0,391.0 596.0,392.0 600.0,394.0 607.0,393.0 611.0,394.5" fill="none" stroke="#fff" stroke-width="0.6"/>
<path d="M624.0,398.0 626.0,396.0 628.0,392.0" fill="none" stroke="#fff" stroke-width="0.6"/>
<path d="M584.0,409.0 587.0,412.0 591.0,414.5 595.0,416.0" fill="none" stroke="#fff" stroke-width="0.6"/>
<path d="M598.0,415.0 599.0,419.0 597.0,423.0" fill="none" stroke="#fff" stroke-width="0.6"/>
<path d="M601.0,416.0 603.0,420.0 607.0,423.0 609.0,420.5" fill="none" stroke="#fff" stroke-width="0.6"/>
</svg>
<!-- /MAP -->
  <!-- CARD 2 -->
  <div class="card" id="c2" style="left:349px;top:668px;width:546px;height:300px">
    <div class="abs" style="left:460px;top:24px;width:60px;height:28px;border:1px solid #dadce0;border-radius:14px;background:#fff"></div>
    <svg class="abs" style="left:467px;top:28px" width="20" height="20" viewBox="0 0 20 20"><circle cx="10" cy="10" r="7.300" fill="none" stroke="#137333" stroke-width="1.600"/><path d="M6.300 10.200l2.600 2.600 4.900-5" fill="none" stroke="#137333" stroke-width="1.600"/></svg>
    <svg class="abs" style="left:499px;top:36px" width="10" height="6" viewBox="0 0 10 6"><path d="M0.500 0.500H9.500L5 5Z" fill="#5f6368"/></svg>
    <div class="t" style="left:24px;top:29px;font-size:12px;color:#5f6368;letter-spacing:.5px"><span class="dash" style="padding-bottom:1px">過去 <b>30</b> 分間のユーザー</span></div>
    <div class="t" style="left:24px;top:52px;font-size:33px;color:#202124;transform:scaleX(1.2);transform-origin:0 0">0</div>
    <div class="t" style="left:24px;top:110px;font-size:12px;color:#5f6368;letter-spacing:.5px"><b>1</b> 分あたりのユーザー数</div>
    <div class="abs" style="left:34px;top:174px;width:477px;height:1px;background:repeating-linear-gradient(90deg,#c4c7cc 0 12.700px,transparent 12.700px 15.900px)"></div>
    <div class="t" style="left:24px;top:189.500px;font-size:12px;color:#5f6368;letter-spacing:.8px"><span class="dash" style="padding-bottom:1px">上位の国</span></div>
    <div class="t" style="right:25px;top:189.500px;font-size:12px;color:#5f6368;letter-spacing:.9px"><span class="dash" style="padding-bottom:1px;margin-right:-.9px">ユーザー</span></div>
    <div class="hr" style="left:24px;top:211px;width:496px"></div>
    <div class="t" style="left:209px;top:229px;font-size:14px;color:#5f6368;letter-spacing:.2px">データがありません</div>
  </div>
</div>
</div>
</body>
</html>
